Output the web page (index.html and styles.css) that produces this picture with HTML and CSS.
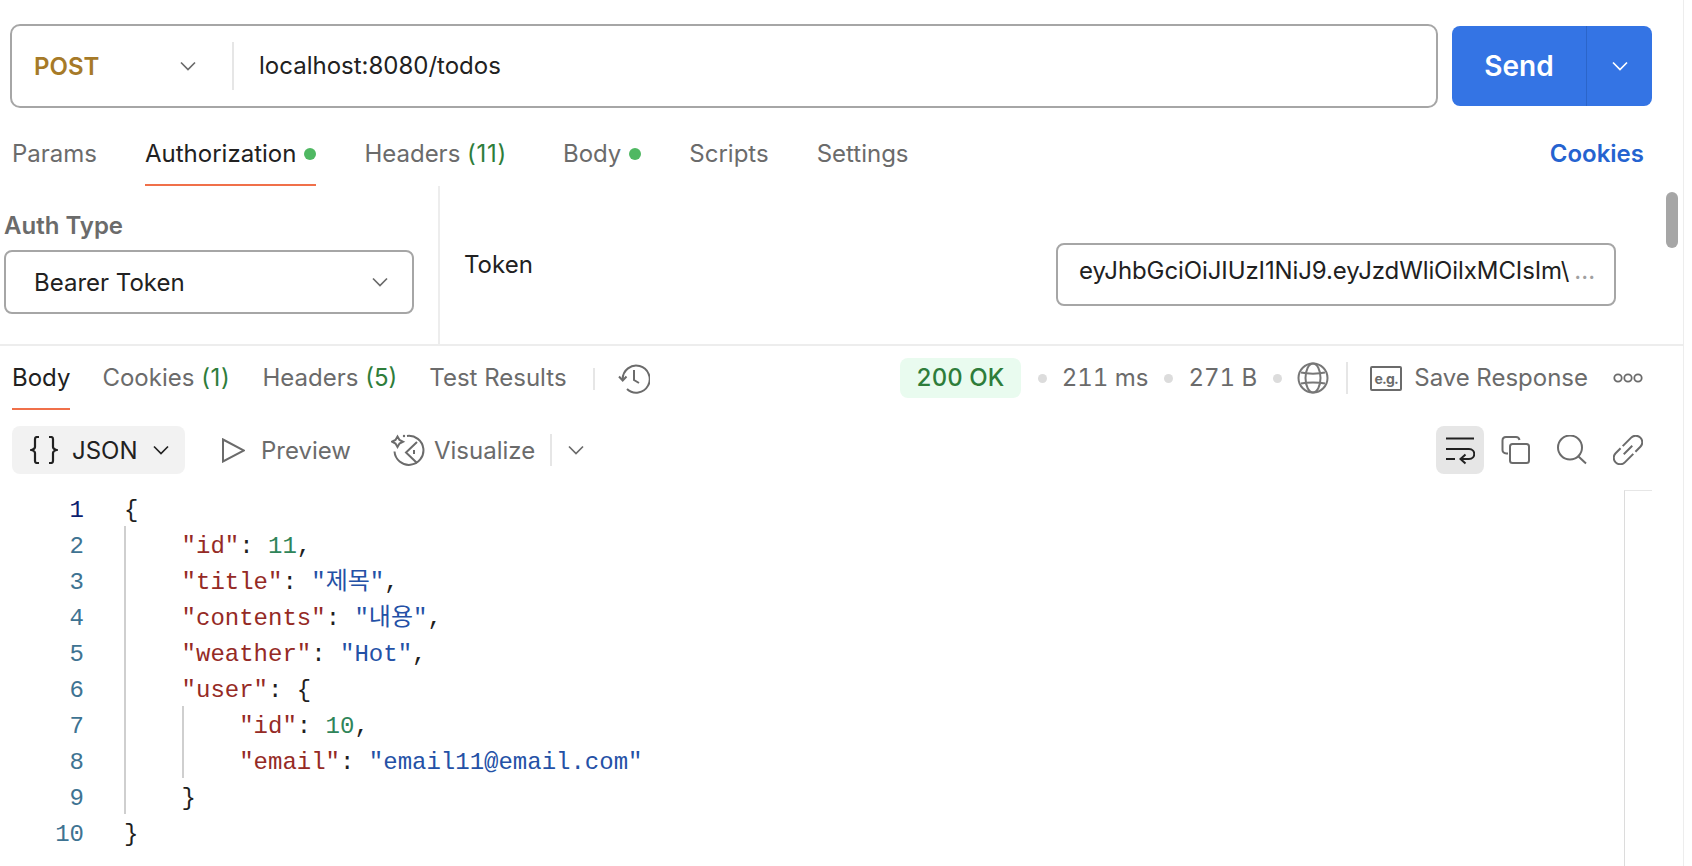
FILE: index.html
```html
<!DOCTYPE html>
<html lang="en">
<head>
<meta charset="utf-8">
<title>Request</title>
<link rel="stylesheet" href="styles.css">
</head>
<body>
<div class="app">
  <div class="request">
    <div class="scroll-thumb"></div>
    <div class="topbar">
      <div class="url-box">
        <div class="method"><span>POST</span>
          <svg class="chev" viewBox="0 0 20 20"><path d="M3 6.500L10 13.500L17 6.500"/></svg>
        </div>
        <div class="sep sep-url"></div>
        <div class="url">localhost:8080/todos</div>
      </div>
      <div class="send">
        <div class="send-label">Send</div>
        <div class="send-more"><svg class="chev" viewBox="0 0 20 20"><path d="M3 6.500L10 13.500L17 6.500"/></svg></div>
      </div>
    </div>
    <div class="tabs req-tabs">
      <div class="tab">Params</div>
      <div class="tab active">Authorization<i class="dot"></i></div>
      <div class="tab wide">Headers <em class="ones">(11)</em></div>
      <div class="tab">Body<i class="dot"></i></div>
      <div class="tab">Scripts</div>
      <div class="tab">Settings</div>
      <div class="cookies">Cookies</div>
    </div>
    <div class="auth">
      <div class="auth-left">
        <div class="auth-label">Auth Type</div>
        <div class="select"><span>Bearer Token</span>
          <svg class="chev" viewBox="0 0 20 20"><path d="M3 6.500L10 13.500L17 6.500"/></svg>
        </div>
      </div>
      <div class="auth-right">
        <div class="token-label">Token</div>
        <div class="token-input"><span class="token-text">eyJhbGciOiJIUzI1NiJ9.eyJzdWliOilxMCIsIm\</span><span class="ellipsis">...</span></div>
      </div>
    </div>
  </div>

  <div class="response">
    <div class="res-head">
      <div class="tabs res-tabs">
        <div class="tab active">Body</div>
        <div class="tab">Cookies <em class="ones">(1)</em></div>
        <div class="tab">Headers <em>(5)</em></div>
        <div class="tab">Test Results</div>
      </div>
      <div class="sep sep-a"></div>
      <svg class="icon history" viewBox="0 0 32 32"><path d="M4.700 17A13.500 13.500 0 1 1 9 27"/><path d="M1 14.500L4.700 18.500L8.500 14.500"/><path d="M16 8V18L21 21"/></svg>
      <div class="meta">
        <div class="status">200 OK</div>
        <i class="bullet"></i><span class="meta-text">211 ms</span>
        <i class="bullet"></i><span class="meta-text">271 B</span>
        <i class="bullet"></i>
        <svg class="icon globe" viewBox="0 0 32 32"><circle cx="16" cy="16" r="14.500"/><ellipse cx="16" cy="16" rx="7.500" ry="14.500"/><path d="M4 10.500C10 12 22 12 28 10.500M4 21.500C10 20 22 20 28 21.500"/></svg>
        <div class="sep sep-b"></div>
        <span class="eg">e.g.</span>
        <span class="meta-text save">Save Response</span>
        <svg class="more" viewBox="0 0 30 12"><circle cx="5" cy="6" r="3.700"/><circle cx="15" cy="6" r="3.700"/><circle cx="25" cy="6" r="3.700"/></svg>
      </div>
    </div>

    <div class="toolbar">
      <div class="json-btn">
        <svg class="braces" viewBox="0 0 28 28"><path d="M9 1H7Q5 1 5 3V11Q5 13 1.500 14Q5 15 5 17V25Q5 27 7 27H9"/><path d="M19 1H21Q23 1 23 3V11Q23 13 26.500 14Q23 15 23 17V25Q23 27 21 27H19"/></svg>
        <span>JSON</span>
        <svg class="chev dark" viewBox="0 0 20 20"><path d="M3 6.500L10 13.500L17 6.500"/></svg>
      </div>
      <div class="tool preview">
        <svg class="icon play" viewBox="0 0 23 25"><path d="M1 1.500L22 12.500L1 23.500Z"/></svg><span>Preview</span>
      </div>
      <div class="tool visualize">
        <svg class="icon viz" viewBox="0 0 34 34"><path d="M16 3A14.500 14.500 0 1 1 3.500 18.500"/><path d="M26 9L15 19.500L26 30"/><path d="M23 17V21"/><path d="M6.500 3.500L8.500 7L12 8.700L8.500 10.500L6.500 14L4.500 10.500L1 8.700L4.500 7Z"/><circle class="fill-dot" cx="13" cy="3" r="1.200"/></svg><span>Visualize</span>
      </div>
      <div class="sep sep-c"></div>
      <svg class="chev grey" viewBox="0 0 20 20"><path d="M3 6.500L10 13.500L17 6.500"/></svg>
      <div class="tool-icons">
        <div class="wrap-btn">
          <svg viewBox="0 0 30 30"><path d="M1 3.500H29M1 14H24C31 14 31 24 24 24H16M1 24H10M20.500 19.500L15.500 24L20.500 28.500"/></svg>
        </div>
        <svg class="icon copy" viewBox="0 0 30 30"><path d="M7 18.500H5.500Q1.500 18 1.500 15V5.500Q1.500 2 5 2H15Q18 2 18.500 5"/><rect x="9" y="9" width="19" height="19" rx="2.500"/></svg>
        <svg class="icon search" viewBox="0 0 30 30"><circle cx="13" cy="12.500" r="12"/><path d="M21.500 21.500L29 28.500"/></svg>
        <svg class="icon link" viewBox="0 0 30 30"><g transform="rotate(-45 15 15)"><path d="M14 8.500H26A6.500 6.500 0 0 1 26 21.500H19"/><path d="M16 21.500H4A6.500 6.500 0 0 1 4 8.500H11"/><path d="M9 15H21"/></g></svg>
      </div>
    </div>

    <div class="editor">
      <div class="gutter">
        <div class="num current">1</div>
        <div class="num">2</div><div class="num">3</div><div class="num">4</div><div class="num">5</div>
        <div class="num">6</div><div class="num">7</div><div class="num">8</div><div class="num">9</div><div class="num">10</div>
      </div>
      <div class="code">
        <div class="line">{</div>
        <div class="fold">
          <div class="line"><b>"id"</b>: <u>11</u>,</div>
          <div class="line"><b>"title"</b>: <s>"제목"</s>,</div>
          <div class="line"><b>"contents"</b>: <s>"내용"</s>,</div>
          <div class="line"><b>"weather"</b>: <s>"Hot"</s>,</div>
          <div class="line"><b>"user"</b>: {</div>
          <div class="fold">
            <div class="line"><b>"id"</b>: <u>10</u>,</div>
            <div class="line"><b>"email"</b>: <s>"email11@email.com"</s></div>
          </div>
          <div class="line">}</div>
        </div>
        <div class="line">}</div>
      </div>
      <div class="minimap"></div>
    </div>
  </div>
</div>
</body>
</html>
```

FILE: styles.css
```css
* { box-sizing: border-box; }
html, body { margin: 0; padding: 0; background: #fff; }
body {
  width: 1692px;
  height: 866px;
  overflow: hidden;
  font-family: Inter, "Liberation Sans", sans-serif;
  font-size: 24px;
  color: #212121;
}
svg { display: block; flex: none; fill: none; }
.app { width: 1684px; height: 866px; border-right: 1px solid #ededed; }

.request { position: relative; height: 346px; border-bottom: 2px solid #ededed; }
.scroll-thumb {
  position: absolute; left: 1666px; top: 192px;
  width: 12px; height: 56px; border-radius: 6px; background: #a6a6a6;
}

.topbar { display: flex; align-items: center; gap: 14px; padding: 24px 0 0 10px; }
.url-box {
  width: 1428px; height: 84px;
  display: flex; align-items: center;
  border: 2px solid #a6a6a6; border-radius: 10px;
}
.method {
  width: 220px;
  display: flex; align-items: center; justify-content: space-between;
  padding: 0 34px 0 22px;
  color: #a67a28; font-weight: 600;
}
.sep { flex: none; width: 2px; background: #e6e6e6; }
.sep-url { height: 48px; }
.url { padding: 0 0 2px 25px; }
.chev { width: 20px; height: 20px; }
.chev path { stroke: #6b6b6b; stroke-width: 1.700; }
.send {
  width: 200px; height: 80px;
  display: flex; align-items: center;
  background: #3474e4; border-radius: 8px; color: #fff;
}
.send-label {
  width: 135px; height: 80px;
  display: flex; align-items: center; justify-content: center;
  font-size: 28px; font-weight: 600;
  border-right: 1px solid #2b65c9;
}
.send-more { flex: 1; display: flex; justify-content: center; }
.send-more path { stroke: #fff; }

.tabs { display: flex; color: #6b6b6b; }
.tab { display: flex; align-items: center; border-bottom: 2px solid transparent; white-space: pre; }
.tab em { font-style: normal; color: #2e7d3a; }
.tab em.ones { letter-spacing: 0.700px; }
.tab.active { color: #212121; border-bottom-color: #f0704a; }
.dot { width: 12px; height: 12px; margin-left: 8px; border-radius: 50%; background: #4fb862; }

.req-tabs { height: 65px; margin-top: 13px; padding: 0 39px 0 12px; gap: 48px; }
.req-tabs .tab { padding-top: 2px; }
.req-tabs .tab.wide { margin-right: 8px; }
.cookies { margin-left: auto; display: flex; align-items: center; color: #2563d0; font-weight: 600; }

.auth { display: flex; height: 160px; }
.auth-left { width: 440px; padding: 25px 0 0 4px; border-right: 2px solid #ededed; }
.auth-label { font-weight: 600; color: #6b6b6b; line-height: 30px; }
.select {
  width: 410px; height: 64px; margin-top: 9px;
  display: flex; align-items: center; justify-content: space-between;
  padding: 0 22px 0 28px;
  border: 2px solid #a6a6a6; border-radius: 8px;
}
.auth-right { flex: 1; display: flex; align-items: flex-start; padding-left: 24px; }
.token-label { width: 592px; line-height: 30px; padding-top: 64px; height: 100px; }
.token-input {
  width: 560px; height: 63px; margin-top: 57px;
  padding: 0 0 8px 21px;
  display: flex; align-items: center;
  border: 2px solid #a6a6a6; border-radius: 8px;
  white-space: nowrap; overflow: hidden;
}
.token-text { flex: none; letter-spacing: -0.100px; }
.ellipsis { color: #a0a0a0; margin-left: 5px; }

.res-head { display: flex; align-items: stretch; height: 64px; padding-left: 12px; }
.res-tabs { height: 64px; gap: 32px; }
.sep-a { height: 22px; margin: 22px 0 0 26px; }
.icon { stroke: #6b6b6b; stroke-width: 2; }
.history { width: 32px; height: 32px; margin: 16px 0 0 23px; }
.meta { margin-left: auto; display: flex; align-items: center; color: #6b6b6b; padding-right: 40px; height: 64px; font-variant-numeric: tabular-nums; }
.meta-text { margin-top: -2px; }
.status {
  width: 121px; height: 40px; margin-right: 1px;
  display: flex; align-items: center; justify-content: center;
  padding-bottom: 2px;
  background: #e9fbef; border-radius: 8px; color: #2e7d3a; font-weight: 500;
}
.bullet { width: 9px; height: 9px; border-radius: 50%; background: #dcdcdc; margin: 0 15px 0 16px; }
.globe { width: 32px; height: 32px; stroke: #777; }
.sep-b { height: 32px; margin: 0 22px 0 17px; }
.eg {
  width: 32px; height: 25px; border: 2px solid #6b6b6b; border-radius: 2px;
  display: flex; align-items: center; justify-content: center;
  font-size: 14px; font-weight: 700; letter-spacing: -0.300px;
}
.save { margin-left: 12px; }
.more { width: 30px; height: 12px; margin-left: 25px; fill: none; stroke: #6b6b6b; stroke-width: 1.800; }

.toolbar { display: flex; align-items: center; height: 48px; margin-top: 16px; padding: 0 40px 0 12px; color: #6b6b6b; }
.json-btn {
  width: 173px; height: 48px;
  display: flex; align-items: center; gap: 14px;
  padding-left: 18px;
  background: #f2f2f2; border-radius: 8px; color: #212121;
}
.braces { width: 28px; height: 28px; stroke: #212121; stroke-width: 2.200; }
.chev.dark { margin-left: -1px; }
.chev.dark path { stroke: #212121; }
.tool { display: flex; align-items: center; gap: 16px; }
.preview { margin-left: 37px; }
.play { width: 23px; height: 25px; }
.visualize { margin-left: 40px; gap: 9px; }
.viz { width: 34px; height: 34px; }
.fill-dot { fill: #6b6b6b; stroke: none; }
.sep-c { height: 32px; margin: 0 14px 0 15px; }
.chev.grey path { stroke: #6b6b6b; }
.tool-icons { margin-left: auto; display: flex; align-items: center; gap: 26px; }
.tool-icons .icon { width: 30px; height: 30px; }
.wrap-btn {
  width: 48px; height: 48px; margin-right: -9px;
  display: flex; align-items: center; justify-content: center;
  background: #e6e6e6; border-radius: 8px;
}
.wrap-btn svg { width: 30px; height: 30px; stroke: #212121; stroke-width: 2; }

.editor { display: flex; margin-top: 16px; position: relative; font-family: "Liberation Mono", "Noto Sans CJK KR", monospace; font-size: 24px; }
.gutter { width: 84px; text-align: right; color: #3e7392; flex: none; }
.num, .line { height: 36px; padding-top: 5px; line-height: 31px; white-space: pre; }
.num.current { color: #0b216f; }
.code { margin-left: 40px; color: #1f1f1f; }
.fold { padding-left: 55.600px; border-left: 2px solid #cfcfcf; }
.line b { font-weight: 400; color: #952a25; }
.line u { text-decoration: none; color: #2f855a; }
.line s { text-decoration: none; color: #2451a6; }
.minimap {
  position: absolute; left: 1624px; top: 0;
  width: 28px; height: 380px;
  border-left: 1px solid #dcdcdc; border-top: 1px solid #e6e6e6;
}
```
